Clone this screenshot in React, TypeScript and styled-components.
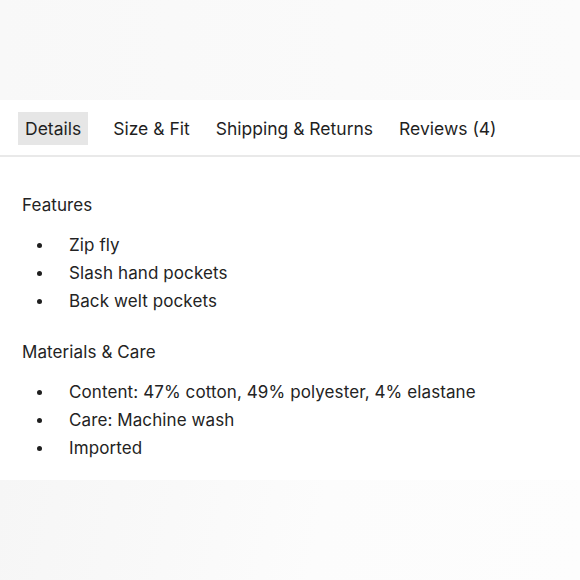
import styled, { createGlobalStyle } from "styled-components";

const GlobalStyle = createGlobalStyle`
    html, body {
        margin: 0;
        padding: 0;
        background: #ffffff;
    }
    body {
        font-family: Inter, "Noto Sans", sans-serif;
        color: #232323;
    }
`;

const tabs = ["Details", "Size & Fit", "Shipping & Returns", "Reviews (4)"];

const sections = [
    {
        title: "Features",
        items: ["Zip fly", "Slash hand pockets", "Back welt pockets"],
    },
    {
        title: "Materials & Care",
        items: [
            "Content: 47% cotton, 49% polyester, 4% elastane",
            "Care: Machine wash",
            "Imported",
        ],
    },
];

export default function App() {
    return (
        <Page>
            <GlobalStyle />
            <TopFade />
            <TabBar>
                {tabs.map((tab, i) => (
                    <Tab key={tab} $active={i === 0}>{tab}</Tab>
                ))}
            </TabBar>
            <Content>
                {sections.map((section) => (
                    <Section key={section.title}>
                        <SectionTitle>{section.title}</SectionTitle>
                        <List>
                            {section.items.map((item) => (
                                <Item key={item}>{item}</Item>
                            ))}
                        </List>
                    </Section>
                ))}
            </Content>
            <BottomFade />
        </Page>
    );
}

const Page = styled.div`
    width: 580px;
    height: 580px;
    display: flex;
    flex-direction: column;
    overflow: hidden;
`;

const TopFade = styled.div`
    height: 100px;
    flex-shrink: 0;
    background: linear-gradient(90deg, #f8f8f8 0%, #fafafa 60%, #fbfbfb 100%);
`;

const TabBar = styled.div`
    display: flex;
    align-items: center;
    gap: 14px;
    padding: 12px 18px 10px;
    border-bottom: 2px solid #e9e9e9;
`;

const Tab = styled.div<{ $active?: boolean }>`
    height: 33px;
    display: flex;
    align-items: center;
    padding: 0 ${(p) => (p.$active ? "7px" : "6px")};
    margin-right: ${(p) => (p.$active ? "5px" : "0")};
    font-size: 17.5px;
    color: #1f1f1f;
    background: ${(p) => (p.$active ? "#e6e6e6" : "transparent")};
`;

const Content = styled.div`
    display: flex;
    flex-direction: column;
    gap: 23px;
    padding: 34px 22px 0;
    flex: 1;
`;

const Section = styled.div`
    display: flex;
    flex-direction: column;
`;

const SectionTitle = styled.div`
    font-size: 17px;
    line-height: 28px;
    letter-spacing: 0.1px;
    margin-bottom: 12px;
`;

const List = styled.ul`
    margin: 0;
    padding: 0;
    list-style: none;
`;

const Item = styled.li`
    position: relative;
    font-size: 17px;
    line-height: 28px;
    letter-spacing: 0.1px;
    padding-left: 47px;

    &::before {
        content: "";
        position: absolute;
        left: 15px;
        top: 12px;
        width: 5px;
        height: 5px;
        border-radius: 50%;
        background: #1f1f1f;
    }
`;

const BottomFade = styled.div`
    height: 100px;
    flex-shrink: 0;
    background: linear-gradient(100deg, #f6f6f6 0%, #f9f9f9 30%, #fcfcfc 55%, #fdfdfd 100%);
`;
